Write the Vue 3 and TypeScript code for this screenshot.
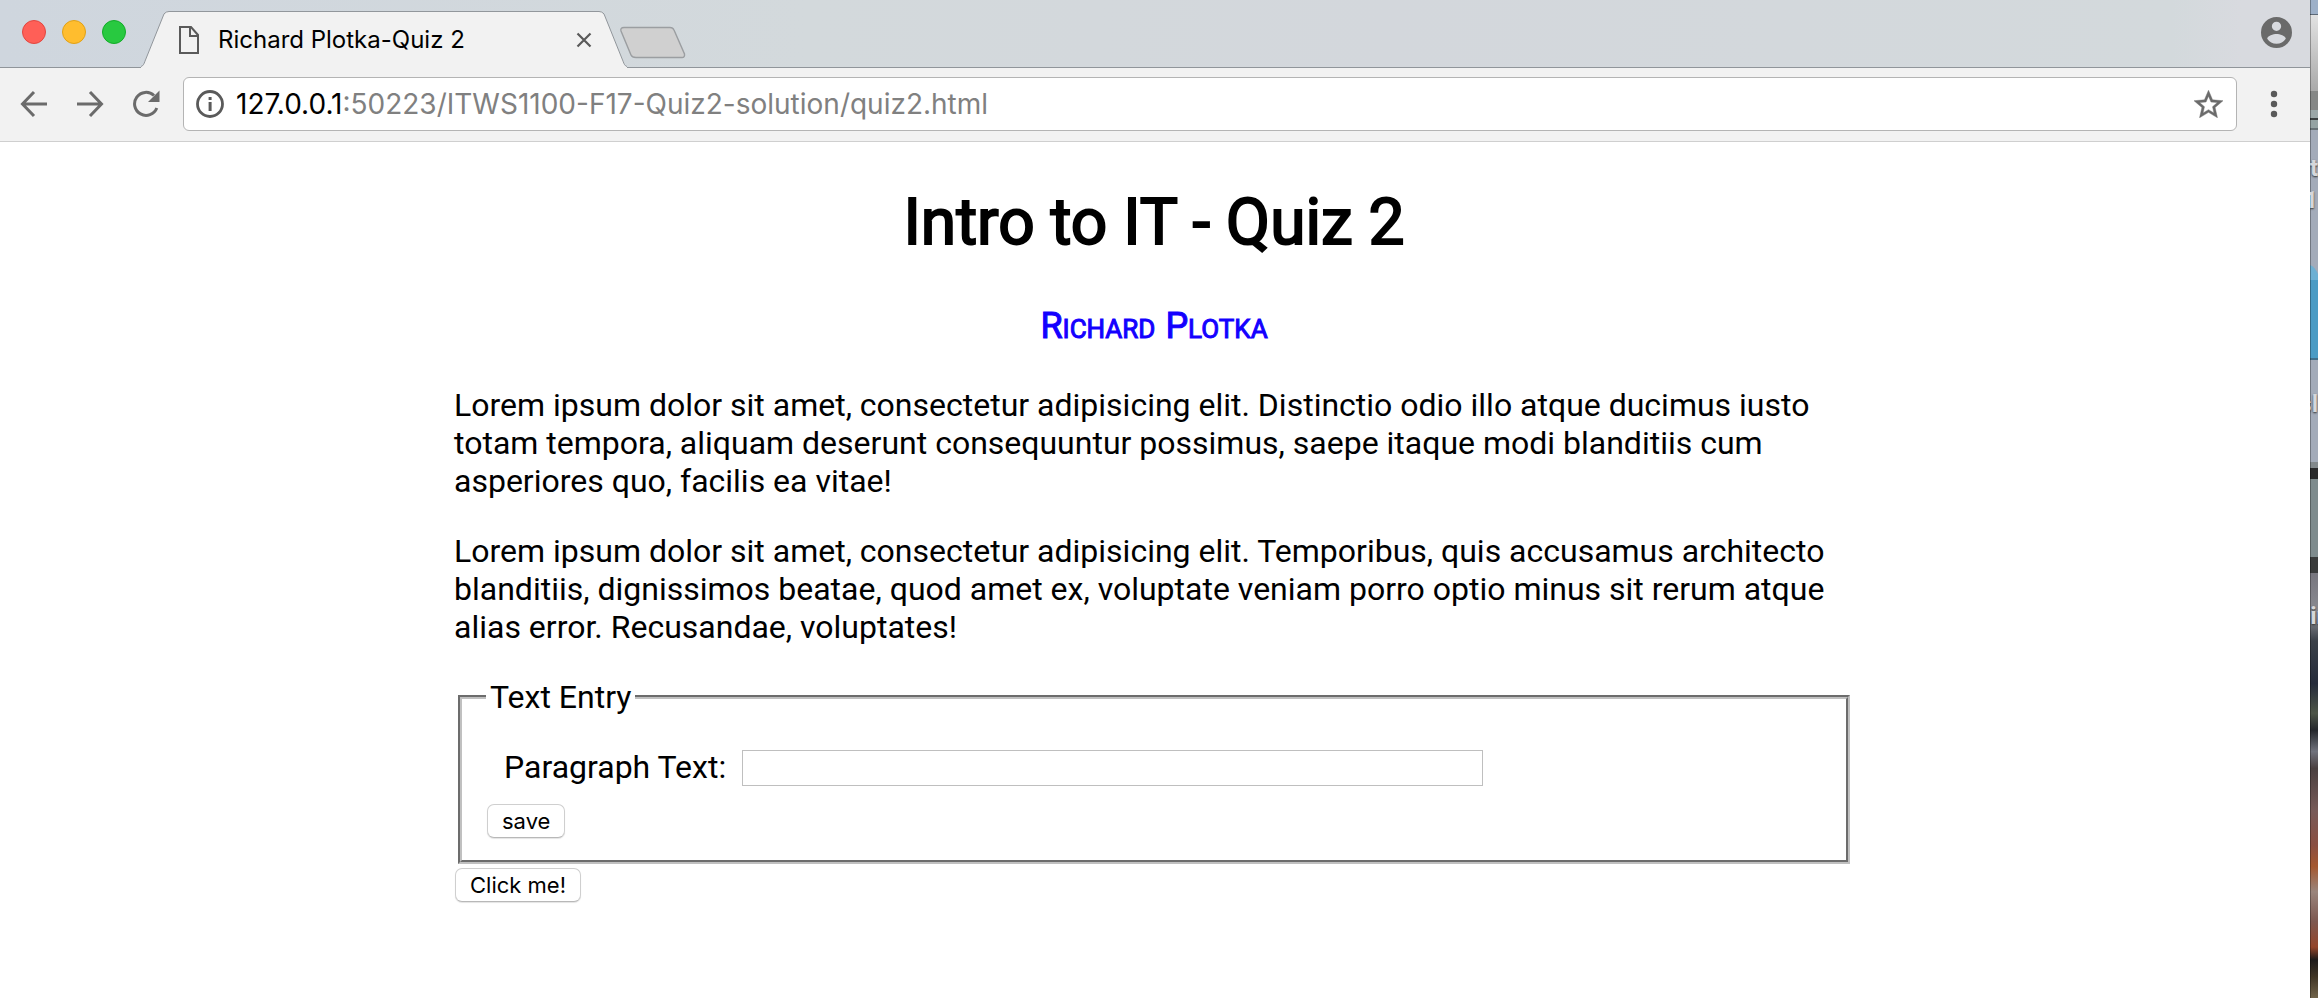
<script setup lang="ts">
import { ref } from 'vue'

const tabTitle = 'Richard Plotka-Quiz 2'
const host = '127.0.0.1'
const path = ':50223/ITWS1100-F17-Quiz2-solution/quiz2.html'
const author: string[] = ['Richard', 'Plotka']
const paragraphs: string[] = [
  'Lorem ipsum dolor sit amet, consectetur adipisicing elit. Distinctio odio illo atque ducimus iusto totam tempora, aliquam deserunt consequuntur possimus, saepe itaque modi blanditiis cum asperiores quo, facilis ea vitae!',
  'Lorem ipsum dolor sit amet, consectetur adipisicing elit. Temporibus, quis accusamus architecto blanditiis, dignissimos beatae, quod amet ex, voluptate veniam porro optio minus sit rerum atque alias error. Recusandae, voluptates!',
]
const entry = ref('')
function save(): void {
  entry.value = entry.value.trim()
}
</script>

<template>
  <div class="screen">
    <div class="window">
      <header class="strip">
        <div class="lights">
          <button class="light red" aria-label="Close window"></button>
          <button class="light amber" aria-label="Minimise window"></button>
          <button class="light green" aria-label="Zoom window"></button>
        </div>
        <div class="tab">
          <svg class="tab-shape" viewBox="0 0 486 58" preserveAspectRatio="none" aria-hidden="true">
            <path d="M0 58 L0 56.500 C2 56 3 54 4 51 L23 3 Q25 .5 28 .5 H458 Q461 .5 463 3 L482 51 C483 54 484 56 486 56.500 V58Z" fill="#f2f2f2" />
            <path d="M0 56.500 C2 56 3 54 4 51 L23 3 Q25 .5 28 .5 H458 Q461 .5 463 3 L482 51 C483 54 484 56 486 56.500" fill="none" stroke="#90959a" />
          </svg>
          <svg class="doc" viewBox="0 0 20 28" aria-hidden="true">
            <path d="M1 1H12L19 9V27H1Z M11 1V10H19" fill="none" stroke="#5a5a5a" stroke-width="2" />
          </svg>
          <span class="title">{{ tabTitle }}</span>
          <button class="close" aria-label="Close tab">
            <svg viewBox="0 0 16 16"><path d="M1.500 1.500 14.500 14.500M14.500 1.500 1.500 14.500" stroke="#5a5a5a" stroke-width="2.200" /></svg>
          </button>
        </div>
        <button class="new-tab" aria-label="New tab">
          <svg viewBox="0 0 68 34"><path d="M6 1.500H51Q54 1.500 55 4L65.500 28Q66 31.500 63 31.500H17Q13 31.500 12 29L2 5Q1 1.500 5 1.500Z" fill="#d0d0d0" stroke="#9b9ea1" stroke-width="1.400" /></svg>
        </button>
        <button class="profile" aria-label="Profile">
          <svg viewBox="2 2 20 20"><path fill="#6a6a6a" d="M12 2a10 10 0 1 0 0 20 10 10 0 0 0 0-20zm0 3a3 3 0 1 1 0 6 3 3 0 0 1 0-6zm0 14.200a7.200 7.200 0 0 1-6-3.220c.03-1.990 4-3.080 6-3.080s5.970 1.090 6 3.080a7.200 7.200 0 0 1-6 3.220z" /></svg>
        </button>
      </header>

      <nav class="toolbar">
        <button class="nav" aria-label="Back">
          <svg viewBox="0 0 28 28"><path d="M27 14H3M14 2 2.500 14 14 26" fill="none" stroke="#6b6b6b" stroke-width="3" /></svg>
        </button>
        <button class="nav" aria-label="Forward">
          <svg viewBox="0 0 28 28"><path d="M1 14H25M14 2 25.500 14 14 26" fill="none" stroke="#6b6b6b" stroke-width="3" /></svg>
        </button>
        <button class="nav" aria-label="Reload">
          <svg viewBox="0 0 28 28"><path d="M24.800 18A11.500 11.500 0 1 1 22 5.500" fill="none" stroke="#6b6b6b" stroke-width="3" /><path d="M27.500 .5V12H16Z" fill="#6b6b6b" /></svg>
        </button>
        <div class="omnibox">
          <svg class="info" viewBox="0 0 28 28" aria-hidden="true"><circle cx="14" cy="14" r="12.500" fill="none" stroke="#5a5a5a" stroke-width="2.800" /><path d="M12.600 7h3v3h-3zM12.600 12h3v9h-3z" fill="#5a5a5a" /></svg>
          <a class="url" href="#"><span class="host">{{ host }}</span>{{ path }}</a>
          <button class="star" aria-label="Bookmark">
            <svg viewBox="2 2 20 19"><path fill="#6b6b6b" stroke="#6b6b6b" stroke-width=".3" d="M22 9.240l-7.190-.62L12 2 9.190 8.630 2 9.240l5.460 4.730L5.820 21 12 17.270 18.180 21l-1.630-7.030L22 9.240zM12 15.400l-3.760 2.270 1-4.280-3.320-2.880 4.380-.38L12 6.100l1.710 4.040 4.380.38-3.320 2.880 1 4.280L12 15.400z" /></svg>
          </button>
        </div>
        <button class="menu" aria-label="Menu">
          <svg viewBox="0 0 8 28"><g fill="#5a5a5a"><circle cx="4" cy="4" r="3.200" /><circle cx="4" cy="14" r="3.200" /><circle cx="4" cy="24" r="3.200" /></g></svg>
        </button>
      </nav>

      <main class="page">
        <div class="content">
          <h1>Intro to IT - Quiz 2</h1>
          <h2><span v-for="name in author" :key="name">{{ name }}</span></h2>
          <p v-for="text in paragraphs" :key="text">{{ text }}</p>
          <form @submit.prevent="save">
            <fieldset>
              <legend>Text Entry</legend>
              <div class="field">
                <label for="paragraph-text">Paragraph Text:</label>
                <input id="paragraph-text" v-model="entry" type="text" />
              </div>
              <button class="push" type="submit">save</button>
            </fieldset>
          </form>
          <button class="push" type="button">Click me!</button>
        </div>
      </main>
    </div>

    <aside class="desktop" aria-hidden="true">
      <svg viewBox="0 0 8 998" preserveAspectRatio="xMinYMin slice">
        <defs>
          <linearGradient id="bar" x1="0" y1="0" x2="0" y2="1">
            <stop offset="0" stop-color="#e2e2e2" /><stop offset="1" stop-color="#a9a9a9" />
          </linearGradient>
          <linearGradient id="rock" x1="0" y1="0" x2="0" y2="1">
            <stop offset="0" stop-color="#77767e" /><stop offset=".1" stop-color="#8b8c92" />
            <stop offset=".16" stop-color="#3a4048" /><stop offset=".26" stop-color="#252b3a" />
            <stop offset=".33" stop-color="#4d5548" /><stop offset=".37" stop-color="#24272c" />
            <stop offset=".42" stop-color="#70727c" /><stop offset=".46" stop-color="#4a4040" />
            <stop offset=".56" stop-color="#775a58" /><stop offset=".64" stop-color="#8a4f42" />
            <stop offset=".69" stop-color="#a4572f" /><stop offset=".75" stop-color="#9a857c" />
            <stop offset=".82" stop-color="#7d5850" /><stop offset=".88" stop-color="#94452b" />
            <stop offset=".91" stop-color="#1d1a1a" /><stop offset=".95" stop-color="#3f3425" />
            <stop offset="1" stop-color="#71634a" />
          </linearGradient>
        </defs>
        <rect width="8" height="998" fill="#a3abb9" />
        <rect width="8" height="14" fill="#9db0c8" />
        <rect y="14" width="8" height="1" fill="#5d6977" />
        <rect y="15" width="8" height="76" fill="url(#bar)" />
        <rect y="91" width="8" height="19" fill="#858786" />
        <rect y="110" width="8" height="8" fill="#9ba7a8" />
        <rect y="118" width="8" height="2" fill="#3c4142" />
        <rect y="120" width="8" height="8" fill="#95a3a3" />
        <rect y="128" width="8" height="2" fill="#697377" />
        <path d="M0 265Q5 267 8 274V359H0Z" fill="#6db0d3" />
        <rect y="280" width="8" height="78" fill="#4b9bc4" />
        <rect y="358" width="8" height="2" fill="#42708b" />
        <rect y="462" width="8" height="6" fill="#82898c" />
        <rect y="468" width="8" height="11" fill="#292a2b" />
        <rect y="479" width="8" height="78" fill="#7e8b8d" />
        <rect y="557" width="8" height="16" fill="#393b3b" />
        <rect y="573" width="8" height="425" fill="url(#rock)" />
        <rect width="1" height="998" fill="#000" opacity=".3" />
      </svg>
      <span class="caption first">t<br />1</span>
      <span class="caption second">sl</span>
      <span class="caption third">in</span>
    </aside>
  </div>
</template>

<style>
body {
  margin: 0;
}
</style>

<style scoped>
.screen {
  display: flex;
  min-height: 100vh;
  overflow: hidden;
  background: #fff;
  font-family: Roboto, "Liberation Sans", sans-serif;
  color: #000;
}
button {
  font-family: inherit;
  cursor: pointer;
}
svg {
  display: block;
  width: 100%;
  height: 100%;
}
.window {
  flex: 1;
  min-width: 0;
}
.strip {
  display: flex;
  align-items: flex-end;
  height: 68px;
  box-sizing: border-box;
  padding: 0 18px 0 22px;
  background: linear-gradient(#90959a, #90959a) 0 100% / 100% 1px no-repeat, linear-gradient(90deg, #cfd6de, #d3d9dc 35%, #d3d7dc 60%, #d3d9dc 94%, #d8dadf 97%);
}
.lights {
  display: flex;
  gap: 16px;
  align-self: flex-start;
  margin-top: 20px;
}
.light {
  width: 24px;
  height: 24px;
  padding: 0;
  border: 1px solid;
  border-radius: 50%;
}
.red { background: #ff5f57; border-color: #e2463f; }
.amber { background: #ffbd2e; border-color: #e1a116; }
.green { background: #28c940; border-color: #12ac28; }
.strip button:not(.light), .toolbar button {
  flex: none;
  padding: 0;
  border: 0;
  background: none;
}
.tab {
  position: relative;
  display: flex;
  align-items: center;
  width: 486px;
  height: 57px;
  margin-left: 15px;
  padding: 0 35px 0 38px;
  box-sizing: border-box;
}
.tab-shape {
  position: absolute;
  inset: 0;
}
.doc {
  position: relative;
  flex: none;
  width: 20px;
  height: 28px;
}
.title {
  position: relative;
  flex: 1;
  margin-left: 19px;
  font: 24px/28px Inter, Roboto, sans-serif;
  white-space: nowrap;
}
.close {
  position: relative;
  width: 16px;
  height: 16px;
}
.new-tab {
  width: 68px;
  height: 34px;
  margin-bottom: 8px;
  margin-left: -8px;
}
.profile {
  width: 31px;
  height: 31px;
  margin: 0 0 20px auto;
}
.toolbar {
  display: flex;
  align-items: center;
  height: 74px;
  box-sizing: border-box;
  padding: 0 32px 1px 20px;
  border-bottom: 1px solid #cfcfcf;
  background: #f2f2f2;
}
.nav {
  width: 28px;
  height: 28px;
  margin-right: 28px;
}
.nav + .nav + .nav {
  margin-right: 23px;
}
.omnibox {
  display: flex;
  flex: 1;
  align-items: center;
  height: 54px;
  box-sizing: border-box;
  padding: 0 13px 0 12px;
  border: 1px solid #b4b4b4;
  border-radius: 6px;
  background: #fff;
}
.info {
  width: 28px;
  height: 28px;
}
.url {
  flex: 1;
  margin-left: 12px;
  font: 28px/34px Inter, Roboto, sans-serif;
  color: #808080;
  text-decoration: none;
  white-space: nowrap;
}
.host {
  color: #000;
}
.star {
  width: 29px;
  height: 28px;
}
.menu {
  width: 8px;
  height: 28px;
  margin-left: 33px;
}
.page {
  padding: 0 2px 0 0;
}
.content {
  max-width: 1400px;
  margin: 0 auto;
  font-size: 32px;
  line-height: 38px;
}
h1 {
  margin: 0;
  padding-top: 43px;
  font-size: 64px;
  line-height: 76px;
  font-weight: 400;
  -webkit-text-stroke: 2px #000;
  text-align: center;
}
h2 {
  display: flex;
  justify-content: center;
  gap: 10px;
  margin: 42px 0 34px;
  font-size: 26px;
  line-height: 46px;
  font-weight: 400;
  text-transform: uppercase;
  -webkit-text-stroke: 1px #1400ff;
  color: #1400ff;
}
h2 span {
  display: block;
}
h2 span::first-letter {
  font-size: 36px;
}
p {
  margin: 0 0 32px;
}
form {
  margin-bottom: 4px;
}
fieldset {
  min-width: 0;
  margin: 0 4px;
  padding: 0 24px 20px;
  border: 4px groove #c0c0c0;
}
legend {
  padding: 0 4px;
}
.field {
  display: flex;
  align-items: flex-end;
  gap: 16px;
  padding: 32px 18px 16px;
}
.field input {
  width: 741px;
  max-width: 100%;
  height: 36px;
  box-sizing: border-box;
  border: 1px solid #bfbfbf;
  font-size: 22px;
}
.push {
  display: block;
  height: 34px;
  margin: 2px 1px;
  padding: 0 14px;
  border: 1px solid #cfcfcf;
  border-bottom-color: #b8b8b8;
  border-radius: 7px;
  background: #fff;
  box-shadow: 0 1px 1px #e4e4e4;
  color: #000;
  font: 22px/30px Inter, Roboto, sans-serif;
}
.desktop {
  position: relative;
  flex: none;
  width: 8px;
  overflow: hidden;
}
.desktop svg {
  position: absolute;
  inset: 0;
}
.caption {
  position: absolute;
  right: 0;
  color: #d6d7da;
  font-size: 24px;
  font-weight: 700;
  line-height: 32px;
  text-align: right;
  text-shadow: 0 1px 2px #333;
}
.first { top: 152px; }
.second { top: 388px; }
.third { top: 600px; right: -12px; }
</style>
